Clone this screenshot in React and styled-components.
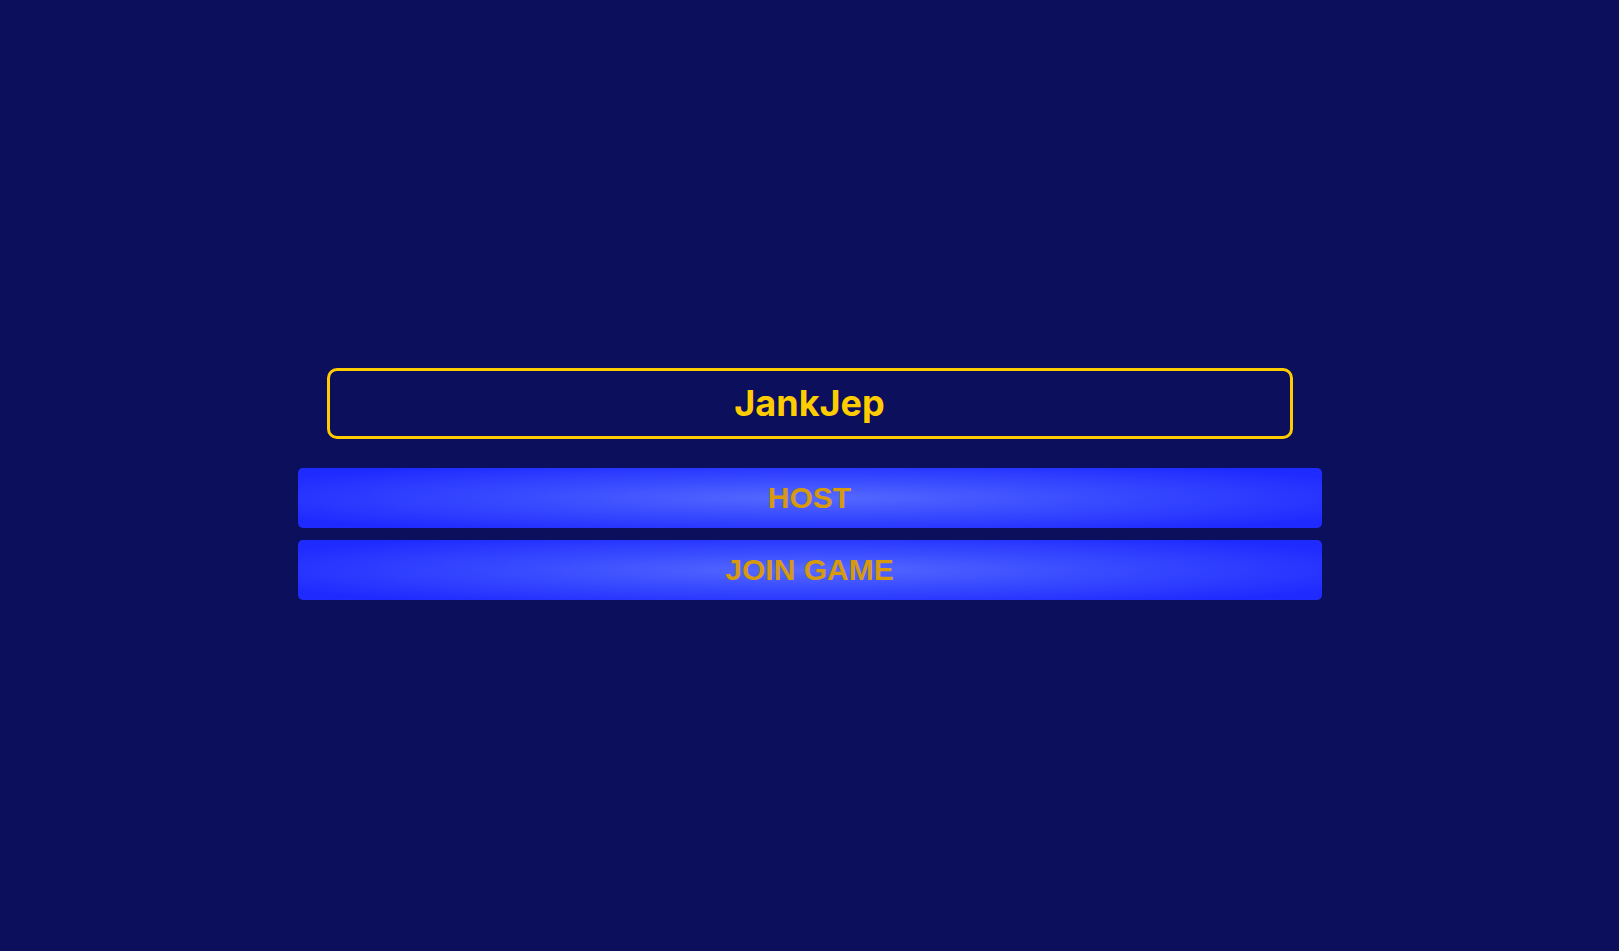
import React from 'react';
import styled, { createGlobalStyle } from 'styled-components';

const GlobalStyle = createGlobalStyle`
  html, body {
    background-color: #0b0f5c;
  }
  body {
    margin: 8px;
  }
`;

const Screen = styled.div`
  min-height: 100vh;
  display: flex;
  justify-content: center;
  align-items: center;
`;

const Menu = styled.div`
  width: 1024px;
  display: flex;
  flex-direction: column;
  gap: 12px;
`;

const Title = styled.h1`
  margin: 0 29px 17px;
  padding: 11px;
  border: 3px solid #ffcc00;
  border-radius: 10px;
  color: #ffcc00;
  font-family: Inter, "Noto Sans", sans-serif;
  font-weight: 700;
  font-size: 36px;
  line-height: 43px;
  text-align: center;
`;

const MenuButton = styled.button`
  height: 60px;
  border: none;
  border-radius: 5px;
  background: radial-gradient(ellipse 60% 65% at center, #5569ff 0%, #3a4cff 45%, #1f2aff 100%);
  color: #d69a0c;
  font-family: "Liberation Sans", Arial, sans-serif;
  font-weight: 700;
  font-size: 30px;
  cursor: pointer;
  text-transform: uppercase;
`;

const App = () => (
  <>
    <GlobalStyle />
    <Screen>
      <Menu>
        <Title>JankJep</Title>
        <MenuButton>Host</MenuButton>
        <MenuButton>Join Game</MenuButton>
      </Menu>
    </Screen>
  </>
);

export default App;
